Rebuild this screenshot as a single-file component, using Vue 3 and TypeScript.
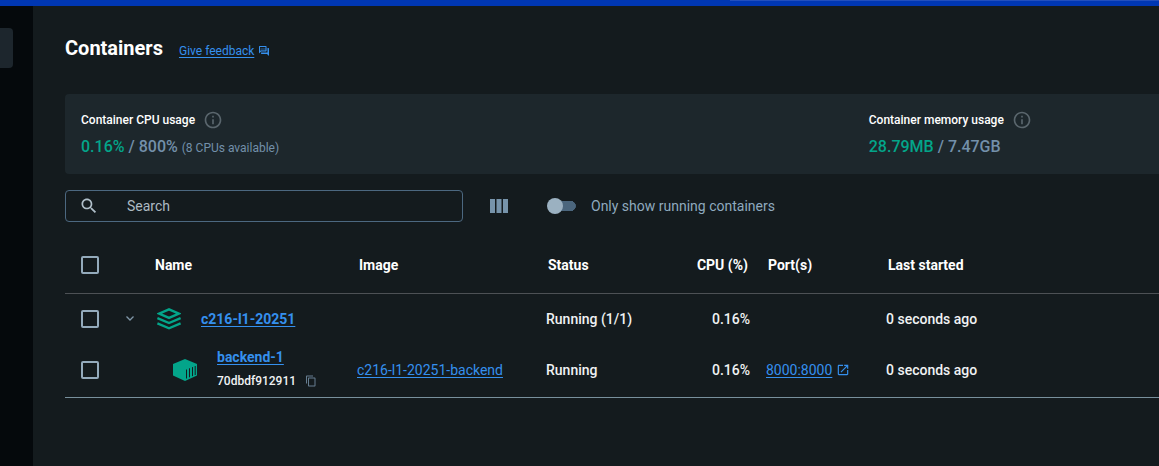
<script setup lang="ts">
import { ref } from 'vue'

interface Row {
  name: string
  id?: string
  image?: string
  status: string
  cpu: string
  port?: string
  started: string
}

const search = ref('')
const onlyRunning = ref(false)
const rows: Row[] = [
  { name: 'c216-l1-20251', status: 'Running (1/1)', cpu: '0.16%', started: '0 seconds ago' },
  {
    name: 'backend-1',
    id: '70dbdf912911',
    image: 'c216-l1-20251-backend',
    status: 'Running',
    cpu: '0.16%',
    port: '8000:8000',
    started: '0 seconds ago',
  },
]
const usages = [
  { label: 'Container CPU usage', used: '0.16%', total: '800%', note: '(8 CPUs available)' },
  { label: 'Container memory usage', used: '28.79MB', total: '7.47GB', note: '' },
]
</script>

<template>
  <div class="app">
    <div class="topbar"><span class="topbar-field"></span></div>
    <div class="body">
      <nav class="sidebar" aria-label="Main">
        <a class="nav-active" href="#" aria-label="Containers"></a>
      </nav>
      <main class="content">
        <header class="heading">
          <h1>Containers</h1>
          <a class="feedback" href="#"><span class="underlined">Give feedback</span>
            <svg width="12" height="12" viewBox="0 0 24 24" fill="currentColor" aria-hidden="true">
              <path d="M5 6h12v6H5z" opacity=".3" />
              <path d="M15 4v7H5.200L4 12.200V4h11m1-2H3c-.55 0-1 .45-1 1v14l4-4h10c.55 0 1-.45 1-1V3c0-.55-.45-1-1-1zm5 4h-2v9H6v2c0 .55.45 1 1 1h11l4 4V7c0-.55-.45-1-1-1z" />
            </svg>
          </a>
        </header>

        <section class="usage">
          <div v-for="u in usages" :key="u.label">
            <div class="usage-label">
              {{ u.label }}
              <svg width="20" height="20" viewBox="0 0 24 24" fill="#5a666d" aria-hidden="true">
                <path d="M11 7h2v2h-2zm0 4h2v6h-2zm1-9C6.480 2 2 6.480 2 12s4.480 10 10 10 10-4.480 10-10S17.520 2 12 2zm0 18c-4.410 0-8-3.590-8-8s3.590-8 8-8 8 3.590 8 8-3.590 8-8 8z" />
              </svg>
            </div>
            <div class="usage-value">
              <span class="used">{{ u.used }}</span> / {{ u.total }}
              <small v-if="u.note">{{ u.note }}</small>
            </div>
          </div>
        </section>

        <div class="toolbar">
          <label class="search">
            <svg width="20" height="20" viewBox="0 0 24 24" fill="#b0bfc9" aria-hidden="true">
              <path d="M15.500 14h-.79l-.28-.27C15.410 12.590 16 11.110 16 9.500 16 5.910 13.090 3 9.500 3S3 5.910 3 9.500 5.910 16 9.500 16c1.610 0 3.090-.59 4.230-1.570l.27.28v.79l5 4.990L20.490 19l-4.990-5zm-6 0C7.010 14 5 11.990 5 9.500S7.010 5 9.500 5 14 7.010 14 9.500 11.990 14 9.500 14z" />
            </svg>
            <input v-model="search" type="text" placeholder="Search" aria-label="Search" />
          </label>
          <button class="columns" type="button" aria-label="Choose columns">
            <svg width="18" height="14" viewBox="0 0 18 14" fill="#7794ab" aria-hidden="true">
              <path d="M0 0h5v14H0zM6.500 0h5v14h-5zM13 0h5v14h-5z" />
            </svg>
          </button>
          <label class="toggle">
            <input v-model="onlyRunning" type="checkbox" role="switch" />
            <span>Only show running containers</span>
          </label>
        </div>

        <table>
          <colgroup>
            <col class="c-check" /><col class="c-name" /><col class="c-image" /><col class="c-status" />
            <col class="c-cpu" /><col class="c-port" /><col />
          </colgroup>
          <thead>
            <tr>
              <th class="check"><input type="checkbox" aria-label="Select all" /></th>
              <th class="name-head">Name</th>
              <th>Image</th>
              <th>Status</th>
              <th class="num">CPU (%)</th>
              <th>Port(s)</th>
              <th>Last started</th>
            </tr>
          </thead>
          <tbody>
            <tr v-for="r in rows" :key="r.name">
              <td class="check"><input type="checkbox" :aria-label="'Select ' + r.name" /></td>
              <td>
                <div v-if="!r.id" class="group">
                  <button class="chevron" type="button" aria-label="Collapse">
                    <svg width="8" height="5" viewBox="0 0 8 5" fill="none" stroke="#8097a8" stroke-width="1.300" aria-hidden="true">
                      <path d="M.5.5 4 4 7.500.5" />
                    </svg>
                  </button>
                  <svg width="24" height="22" viewBox="0 0 24 22" fill="none" stroke="#03a58a" stroke-width="2.400" aria-hidden="true">
                    <path d="M12 1.300 2 5.600l10 4.300 10-4.300z" />
                    <path d="M.4 10 12 15l11.600-5M.4 15.300l11.600 5 11.600-5" />
                  </svg>
                  <a class="name" href="#">{{ r.name }}</a>
                </div>
                <div v-else class="child">
                  <svg width="24" height="22" viewBox="0 0 24 22" aria-hidden="true">
                    <path fill="#03a58a" d="M12 0 24 5v11.500L12 22 0 16.500V5z" />
                    <path stroke="#141b1e" stroke-width="1" d="M13.500 10.500v9M16.500 9.300v9M19.500 8.100v9M22.200 7v9" />
                  </svg>
                  <div class="child-text">
                    <a class="name" href="#">{{ r.name }}</a>
                    <div class="cid">
                      {{ r.id }}
                      <button type="button" aria-label="Copy container ID">
                        <svg width="12" height="12" viewBox="0 0 24 24" fill="#667e91" aria-hidden="true">
                          <path d="M16 1H4c-1.100 0-2 .9-2 2v14h2V3h12V1zm3 4H8c-1.100 0-2 .9-2 2v14c0 1.100.9 2 2 2h11c1.100 0 2-.9 2-2V7c0-1.100-.9-2-2-2zm0 16H8V7h11v14z" />
                        </svg>
                      </button>
                    </div>
                  </div>
                </div>
              </td>
              <td><a v-if="r.image" href="#">{{ r.image }}</a></td>
              <td>{{ r.status }}</td>
              <td class="num">{{ r.cpu }}</td>
              <td>
                <a v-if="r.port" class="port" href="#"><span class="underlined">{{ r.port }}</span>
                  <svg width="14" height="14" viewBox="0 0 24 24" fill="currentColor" aria-hidden="true">
                    <path d="M19 19H5V5h7V3H5c-1.110 0-2 .9-2 2v14c0 1.100.89 2 2 2h14c1.100 0 2-.9 2-2v-7h-2v7zM14 3v2h3.590l-9.830 9.830 1.410 1.410L19 6.410V10h2V3h-7z" />
                  </svg>
                </a>
              </td>
              <td>{{ r.started }}</td>
            </tr>
          </tbody>
        </table>
      </main>
    </div>
  </div>
</template>

<style>
body {
  background: #141b1e;
}
</style>

<style scoped>
* {
  box-sizing: border-box;
}
.app {
  display: flex;
  flex-direction: column;
  min-height: 100vh;
  overflow: hidden;
  background: #141b1e;
  color: #f0f2f3;
  font: 500 14px/20px Roboto, sans-serif;
}
.topbar {
  display: flex;
  justify-content: flex-end;
  height: 6px;
  background: #0037b3;
}
.topbar-field {
  width: 37%;
  height: 1px;
  background: #234fbc;
}
.body {
  display: flex;
  flex: 1;
}
.sidebar {
  flex: none;
  width: 33px;
  padding-top: 22px;
  background: #05090c;
}
.nav-active {
  display: block;
  width: 13px;
  height: 40px;
  border-radius: 0 4px 4px 0;
  background: #1d262d;
}
.content {
  flex: 1;
  min-width: 0;
  padding: 28px 0 0 32px;
}
.heading {
  display: flex;
  align-items: center;
  gap: 16px;
  height: 28px;
}
h1 {
  margin: 0;
  color: #fff;
  font-size: 20px;
  font-weight: 700;
  line-height: 28px;
}
a {
  color: #3590ee;
  font-weight: 400;
  text-decoration: underline;
  text-underline-offset: 2px;
}
.feedback,
.port {
  display: inline-flex;
  align-items: center;
  gap: 4px;
  text-decoration: none;
}
.underlined {
  text-decoration: underline;
}
.feedback {
  padding-top: 6px;
  font-size: 12px;
}
.usage {
  display: grid;
  grid-template-columns: 19fr 7fr;
  margin-top: 32px;
  padding: 16px 0 16px 16px;
  border-radius: 4px 0 0 4px;
  background: #1d272c;
}
.usage-label {
  display: flex;
  align-items: center;
  gap: 8px;
  color: #fff;
  font-size: 12px;
}
.usage-value {
  margin-top: 6px;
  color: #7390aa;
  font-size: 16px;
  line-height: 22px;
}
.used {
  color: #03a58a;
}
small {
  font-size: 12px;
  font-weight: 400;
  line-height: 12px;
}
.toolbar {
  display: flex;
  align-items: center;
  margin-top: 16px;
}
.search {
  display: flex;
  align-items: center;
  gap: 28px;
  width: 398px;
  height: 32px;
  padding: 0 13px;
  border: 1px solid #4c6880;
  border-radius: 4px;
}
.search input {
  flex: 1;
  min-width: 0;
  padding: 0;
  border: 0;
  outline: 0;
  background: none;
  color: #b4c1ca;
  font: 400 14px/20px Roboto, sans-serif;
}
.search input::placeholder {
  color: #adbac3;
  opacity: 1;
}
button {
  display: flex;
  padding: 0;
  border: 0;
  background: none;
}
.columns {
  margin-left: 27px;
}
.toggle {
  display: flex;
  align-items: center;
  gap: 15px;
  margin-left: 39px;
  color: #8faabe;
  font-weight: 400;
}
.toggle input {
  appearance: none;
  display: flex;
  align-items: center;
  width: 29px;
  height: 16px;
  margin: 0;
  border-radius: 8px;
  background: linear-gradient(#4b667d, #4b667d) left 8px center / 16px 10px no-repeat,
    radial-gradient(circle closest-side, #4b667d 95%, transparent) right center / 10px 10px no-repeat;
}
.toggle input::before {
  content: '';
  width: 16px;
  height: 16px;
  border-radius: 50%;
  background: #9bb1c1;
}
.toggle input:checked {
  justify-content: flex-end;
}
table {
  width: 100%;
  margin-top: 15px;
  border-collapse: collapse;
  table-layout: fixed;
}
.c-check { width: 52px; }
.c-name { width: 232px; }
.c-image { width: 189px; }
.c-status { width: 134px; }
.c-cpu { width: 86px; }
.c-port { width: 120px; }
th,
td {
  height: 51px;
  padding: 0 8px;
  text-align: left;
  font-weight: 500;
  white-space: nowrap;
}
th {
  height: 56px;
  padding: 0 10px;
  border-bottom: 1px solid #4d5155;
  color: #fff;
  font-weight: 700;
}
tbody tr:last-child td {
  height: 53px;
  border-bottom: 1px solid #78909c;
}
.num {
  text-align: right;
}
.check {
  padding: 0 16px;
}
.check input {
  appearance: none;
  display: block;
  width: 18px;
  height: 18px;
  margin: 0;
  border: 2px solid #94abbc;
  border-radius: 2px;
}
.name-head {
  padding-left: 38px;
}
.group {
  display: flex;
  align-items: center;
}
.chevron {
  justify-content: center;
  width: 10px;
  margin-right: 22px;
}
.group .name {
  margin-left: 20px;
}
.name {
  font-weight: 700;
}
.child {
  display: flex;
  align-items: center;
  gap: 20px;
  padding-left: 48px;
}
.child-text {
  padding-bottom: 3px;
  line-height: 20px;
}
.cid {
  display: flex;
  align-items: center;
  gap: 9px;
  margin-top: 4px;
  font-size: 12px;
}
</style>
